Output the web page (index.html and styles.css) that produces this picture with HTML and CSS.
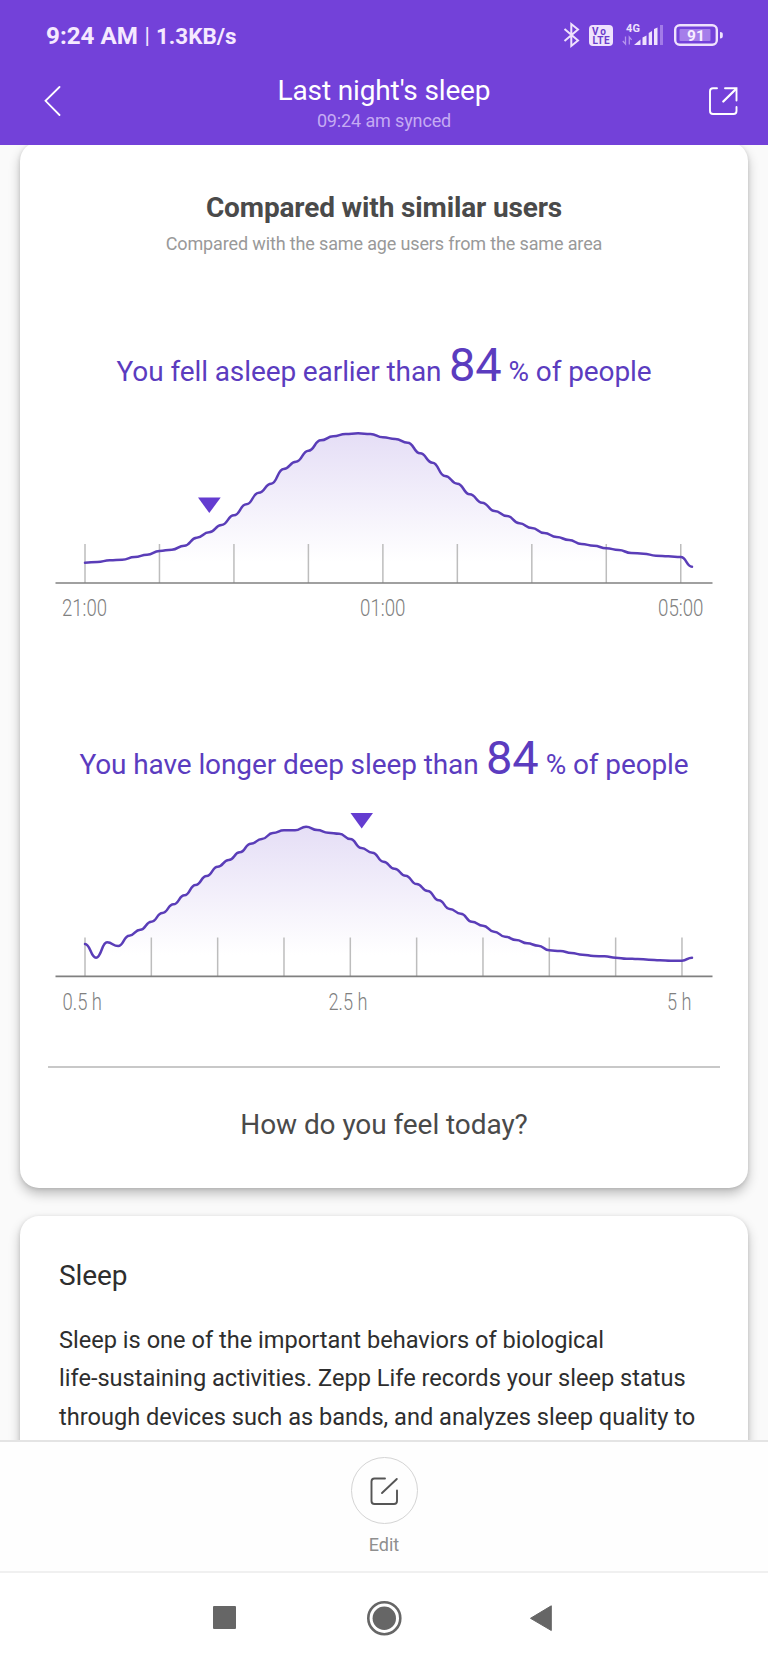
FILE: index.html
```html
<!DOCTYPE html>
<html lang="en">
<head>
<meta charset="utf-8">
<title>Last night's sleep</title>
<link rel="stylesheet" href="styles.css">
</head>
<body>
<div class="screen">
  <header class="header">
    <div class="status">
      <div class="status-left"><span class="clock">9:24 AM</span><span class="bar">|</span><span class="speed">1.3KB/s</span></div>
      <svg class="status-icons" width="164" height="30" viewBox="562 20 164 30">
        <path d="M564.500 29 L578 40.500 L571.300 46 V24 L578 29.500 L564.500 41" fill="none" stroke="#efe2fd" stroke-width="2"/>
        <rect x="589" y="25" width="24" height="21" rx="4" fill="#efe2fd"/>
        <text x="592" y="34.500" class="volte" textLength="14">Vo</text>
        <text x="592.500" y="43.800" class="volte" textLength="17">LTE</text>
        <text x="626" y="31.500" class="net" textLength="14">4G</text>
        <path d="M625.500 36.500 V44 L622.800 41 M629.300 44.500 V37 L631.600 39.800" stroke="#b595ee" stroke-width="1.300" fill="none"/>
        <path d="M634 45 L640.500 39.500 V45Z M642.500 37.500 L646.500 35.500 V45 H642.500Z M648.700 33 L652 31 V45 H648.700Z M654 29 L657.500 27.500 V45 H654Z" fill="#efe2fd"/>
        <rect x="660" y="25" width="3" height="20" fill="#a27be8"/>
        <rect x="675.200" y="25.200" width="41.600" height="19.600" rx="4.500" fill="none" stroke="#efe2fd" stroke-width="2.400"/>
        <rect x="679.500" y="29" width="31" height="12" rx="1" fill="#a57eea"/>
        <path d="M720 32 Q722.800 32 722.800 34 V36 Q722.800 38.500 720 38.500Z" fill="#efe2fd"/>
        <text x="687" y="41" class="pct" textLength="18">91</text>
      </svg>
    </div>
    <div class="nav">
      <svg class="nav-icon" width="32" height="32" viewBox="36 84 32 32"><path d="M59.500 87 L45.500 100.800 L59.500 115" fill="none" stroke="#fff" stroke-width="1.800" stroke-linecap="round"/></svg>
      <div class="titles"><h1 class="title">Last night's sleep</h1><p class="synced">09:24 am synced</p></div>
      <svg class="nav-icon" width="32" height="32" viewBox="707 85 32 32"><g fill="none" stroke="#fff" stroke-linecap="round"><path d="M717 88.300 H713 Q710 88.300 710 91.300 V111 Q710 114 713 114 H733.500 Q736.500 114 736.500 111 V107" stroke-width="1.900"/><path d="M725 88.300 H736.500 V100.500" stroke-width="1.900"/><path d="M736 89 L723.300 101.500" stroke-width="2.300"/></g></svg>
    </div>
  </header>

  <main class="content">
    <section class="card compare">
      <h2 class="compare-title">Compared with similar users</h2>
      <p class="compare-sub">Compared with the same age users from the same area</p>
      <p class="headline"><span>You fell asleep earlier than</span><span class="num">84</span><span>% of people</span></p>
      <svg class="chart" id="asleep" width="728" height="240" viewBox="20 401 728 240">
        <defs><linearGradient id="g1" gradientUnits="userSpaceOnUse" x1="0" y1="433" x2="0" y2="562"><stop offset="0" stop-color="#e5def6"/><stop offset="1" stop-color="#fff"/></linearGradient></defs>
        <path class="area" fill="url(#g1)"/>
        <path class="ticks"/>
        <path class="axis" d="M55.500 583 H712.500"/>
        <path class="curve"/>
        <path class="marker" d="M198 497.500 H220.700 L209.300 513Z"/>
        <text class="label" x="62" y="616.300" textLength="45" lengthAdjust="spacingAndGlyphs">21:00</text>
        <text class="label" x="360" y="616.300" textLength="45.500" lengthAdjust="spacingAndGlyphs">01:00</text>
        <text class="label" x="658" y="616.300" textLength="45.500" lengthAdjust="spacingAndGlyphs">05:00</text>
      </svg>
      <p class="headline second"><span>You have longer deep sleep than</span><span class="num">84</span><span>% of people</span></p>
      <svg class="chart" id="deep" width="728" height="240" viewBox="20 794 728 240">
        <defs><linearGradient id="g2" gradientUnits="userSpaceOnUse" x1="0" y1="826" x2="0" y2="955"><stop offset="0" stop-color="#e5def6"/><stop offset="1" stop-color="#fff"/></linearGradient></defs>
        <path class="area" fill="url(#g2)"/>
        <path class="ticks"/>
        <path class="axis" d="M55.500 976.300 H712.500"/>
        <path class="curve"/>
        <path class="marker" d="M350.500 813 H373 L361.700 828.500Z"/>
        <text class="label" x="62.500" y="1009.500" textLength="39.500" lengthAdjust="spacingAndGlyphs">0.5 h</text>
        <text class="label" x="328.500" y="1009.500" textLength="39" lengthAdjust="spacingAndGlyphs">2.5 h</text>
        <text class="label" x="667" y="1009.500" textLength="24.500" lengthAdjust="spacingAndGlyphs">5 h</text>
      </svg>
      <hr class="rule">
      <p class="question">How do you feel today?</p>
    </section>
    <section class="card about">
      <h3 class="about-title">Sleep</h3>
      <p class="about-text">Sleep is one of the important behaviors of biological<br>life-sustaining activities. Zepp Life records your sleep status<br>through devices such as bands, and analyzes sleep quality to</p>
    </section>
  </main>

  <footer class="toolbar">
    <div class="edit-btn"><svg width="32" height="32" viewBox="367.500 1474.500 32 32"><g fill="none" stroke="#555" stroke-width="1.900" stroke-linecap="round" stroke-linejoin="round"><path d="M384.500 1478 H374 Q371 1478 371 1481 V1500.500 Q371 1503.500 374 1503.500 H393.500 Q396.500 1503.500 396.500 1500.500 V1490"/><path d="M396.300 1478.500 L381.500 1492.500"/></g></svg></div>
    <span class="edit-label">Edit</span>
  </footer>
  <nav class="sysnav">
    <svg width="768" height="91" viewBox="0 1573 768 91" fill="#666">
      <rect x="213" y="1606" width="23" height="23" rx="1"/>
      <circle cx="384.300" cy="1618.200" r="16" fill="none" stroke="#666" stroke-width="2.600"/>
      <circle cx="384.300" cy="1618.200" r="11.700"/>
      <path d="M530.500 1618.300 L551.300 1605.800 V1630.500Z" stroke="#666" stroke-width="1" stroke-linejoin="round"/>
    </svg>
  </nav>
</div>
<script src="charts.js"></script>
</body>
</html>
```
FILE: styles.css
```css
* { box-sizing: border-box; }
body, h1, h2, h3, p { margin: 0; font-weight: 400; }
body { font-family: Roboto, "Liberation Sans", sans-serif; background: #fafafa; }
.screen { width: 768px; height: 1664px; display: flex; flex-direction: column; overflow: hidden; }

.header { height: 145px; flex: none; background: #7341d9; color: #fff; }
.status { height: 72px; padding: 20px 42px 0 46px; display: flex; justify-content: space-between; align-items: flex-start; }
.status-left { display: flex; line-height: 32px; color: #f5e9ff; font-weight: 700; }
.clock { font-size: 24.200px; width: 98.500px; white-space: nowrap; }
.bar { font-size: 22px; width: 11.500px; font-weight: 400; }
.speed { font-size: 22.400px; }
.volte { font: 700 10px Roboto, sans-serif; fill: #6a3bcb; }
.net { font: 700 11px Roboto, sans-serif; fill: #efe2fd; }
.pct { font: 700 15.500px Roboto, sans-serif; fill: #f7eeff; }
.nav { display: flex; justify-content: space-between; padding: 0 29px 0 36px; }
.nav-icon { margin-top: 12px; }
.nav-icon:last-child { margin-top: 13px; }
.titles { flex: 1; margin: 0 4px 0 -3px; text-align: center; padding-top: 2px; }
.title { font-size: 28px; line-height: 34px; letter-spacing: -.14px; white-space: nowrap; }
.synced { font-size: 18px; line-height: 22px; margin-top: 2px; letter-spacing: -.13px; color: #c5abf3; }

.content { flex: 1; min-height: 0; overflow: hidden; padding: 0 20px; }
.card { background: #fff; border-radius: 19px; box-shadow: 0 6px 12px rgba(0,0,0,.24), 0 1px 4px rgba(0,0,0,.12); }
.compare { height: 1046px; margin-top: -3px; padding-top: 49px; color: #444; text-align: center; }
.compare-title { font-size: 28px; line-height: 34px; font-weight: 700; letter-spacing: -.14px; color: #4a4a4a; }
.compare-sub { font-size: 18px; line-height: 22px; margin-top: 8px; letter-spacing: -.14px; color: #999; }
.headline { height: 60px; margin-top: 86px; line-height: 60px; font-size: 28px; letter-spacing: -.1px; color: #5b3cbf; white-space: nowrap; }
.headline.second { margin-top: 93px; }
.num { font-size: 47px; line-height: 47px; margin: 0 7px 0 7.500px; }
.chart { display: block; }
.curve { fill: none; stroke: #5a3db8; stroke-width: 2.500; stroke-linecap: round; }
.ticks { stroke: #bdbdbd; stroke-width: 1.500; fill: none; }
.axis { stroke: #808080; stroke-width: 1.700; }
.marker { fill: #643cd0; }
.label { font: 300 24.500px Roboto, sans-serif; fill: #808080; }
.rule { margin: 32px 28px 0; border: 0; height: 2px; background: #c8c8c8; }
.question { margin-top: 40px; font-size: 28px; line-height: 34px; letter-spacing: -.07px; color: #4a4a4a; }
.about { margin-top: 28px; height: 400px; padding: 43px 39px 0; color: #2e2e2e; }
.about-title { font-size: 28px; line-height: 34px; letter-spacing: -.1px; }
.about-text { margin-top: 28px; font-size: 23.600px; line-height: 38.400px; white-space: nowrap; }

.toolbar { height: 131px; flex: none; background: #fefefe; border-top: 2px solid #e4e4e4; display: flex; flex-direction: column; align-items: center; padding-top: 15px; }
.edit-btn { width: 67px; height: 67px; border: 1.500px solid #d4d4d4; border-radius: 50%; display: flex; align-items: center; justify-content: center; }
.edit-label { margin-top: 10px; font-size: 18px; line-height: 22px; color: #8f8f8f; }
.sysnav { height: 93px; flex: none; background: #fff; border-top: 2px solid #f0f0f0; }
.sysnav svg { display: block; }
```
FILE: charts.js
```js
function draw(id, x0, step, ys, base, top, tickStep, tickCount, endX) {
  const svg = document.getElementById(id);
  let d = `M${x0} ${ys[0]}`;
  let px = x0;
  for (let i = 1; i < ys.length; i++) {
    const x = i === ys.length - 1 ? endX : x0 + step * i;
    const mid = (px + x) / 2;
    d += ` C${mid} ${ys[i - 1]} ${mid} ${ys[i]} ${x} ${ys[i]}`;
    px = x;
  }
  svg.querySelector('.curve').setAttribute('d', d);
  svg.querySelector('.area').setAttribute('d', `${d} V${base} H${x0}Z`);
  let t = '';
  for (let i = 0; i < tickCount; i++) t += `M${x0 + tickStep * i} ${top} V${base} `;
  svg.querySelector('.ticks').setAttribute('d', t);
}

const asleep = [458,456,451,449,441,434,423,419,407,383,367,345,316,283,248,221,177,155,122,91,79,72,70,72,82,87,98,130,158,198,221,253,278,303,318,340,354,369,381,390,402,407,415,420,429,431,437,439,441,470];
const deep = [462,503,457,468,437,419,395,369,343,316,285,258,230,210,187,161,147,129,121,121,110,120,128,131,147,174,188,215,236,257,282,303,331,357,371,395,407,425,440,450,460,467,481,483,489,494,498,499,503,506,507,509,511,512,512,503];

draw('asleep', 85, 12.412, asleep.map(v => 410 + v / 3), 583, 544, 74.47, 9, 692);
draw('deep', 85, 11.055, deep.map(v => 790 + v / 3), 976.3, 937.5, 66.33, 10, 692);
```
